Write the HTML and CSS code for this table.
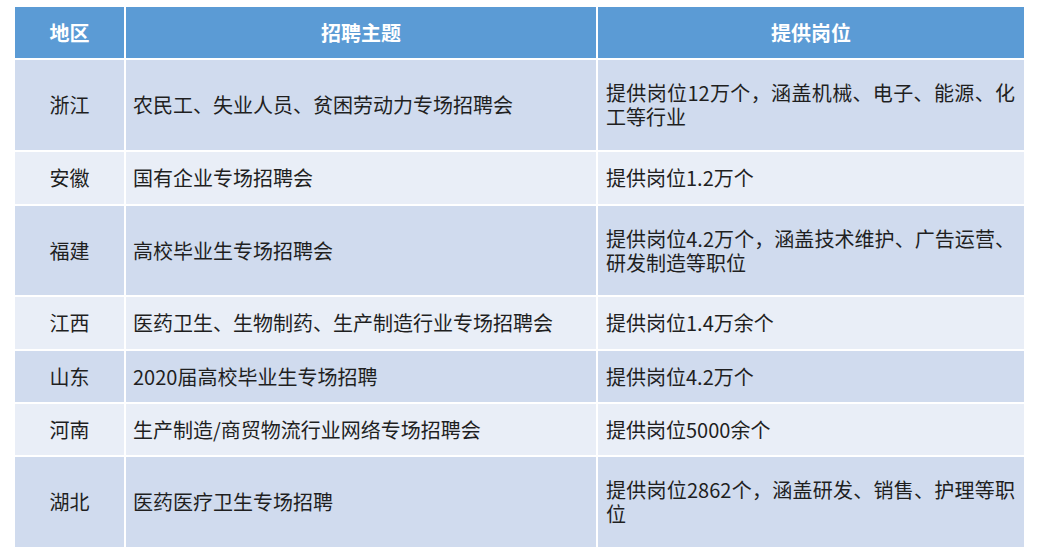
FILE: index.html
```html
<!DOCTYPE html>
<html lang="zh-CN">
<head>
<meta charset="utf-8">
<title>招聘会</title>
<link rel="stylesheet" href="styles.css">
</head>
<body>
<div class="page">
  <table class="jobs">
    <colgroup>
      <col class="c-region">
      <col class="c-theme">
      <col class="c-posts">
    </colgroup>
    <thead>
      <tr class="head">
        <th>地区</th>
        <th>招聘主题</th>
        <th>提供岗位</th>
      </tr>
    </thead>
    <tbody>
      <tr class="dark tall">
        <td class="region">浙江</td>
        <td class="theme">农民工、失业人员、贫困劳动力专场招聘会</td>
        <td class="posts">提供岗位12万个，涵盖机械、电子、能源、化工等行业</td>
      </tr>
      <tr class="light short">
        <td class="region">安徽</td>
        <td class="theme">国有企业专场招聘会</td>
        <td class="posts">提供岗位1.2万个</td>
      </tr>
      <tr class="dark tall2">
        <td class="region">福建</td>
        <td class="theme">高校毕业生专场招聘会</td>
        <td class="posts">提供岗位4.2万个，涵盖技术维护、广告运营、研发制造等职位</td>
      </tr>
      <tr class="light short">
        <td class="region">江西</td>
        <td class="theme">医药卫生、生物制药、生产制造行业专场招聘会</td>
        <td class="posts">提供岗位1.4万余个</td>
      </tr>
      <tr class="dark short2">
        <td class="region">山东</td>
        <td class="theme">2020届高校毕业生专场招聘</td>
        <td class="posts">提供岗位4.2万个</td>
      </tr>
      <tr class="light short2">
        <td class="region">河南</td>
        <td class="theme">生产制造/商贸物流行业网络专场招聘会</td>
        <td class="posts">提供岗位5000余个</td>
      </tr>
      <tr class="dark tall">
        <td class="region">湖北</td>
        <td class="theme">医药医疗卫生专场招聘</td>
        <td class="posts">提供岗位2862个，涵盖研发、销售、护理等职位</td>
      </tr>
    </tbody>
  </table>
</div>
</body>
</html>
```

FILE: styles.css
```css
html, body {
  margin: 0;
  padding: 0;
  background: #ffffff;
}

.page {
  padding: 5px 0 0 13px;
}

.jobs {
  border-collapse: separate;
  border-spacing: 2px;
  table-layout: fixed;
  width: 1013px;
  font-family: "Noto Sans CJK SC", "Noto Sans", sans-serif;
  font-size: 20px;
  line-height: 24px;
  color: #1f1f1f;
}

.c-region { width: 109px; }
.c-theme { width: 470px; }
.c-posts { width: 426px; }

.jobs th,
.jobs td {
  padding: 0 8px;
  vertical-align: middle;
  text-align: left;
}

.head {
  height: 51px;
}

.head th {
  background: #5b9bd5;
  color: #ffffff;
  font-weight: 700;
  font-size: 20px;
  text-align: center;
}

.dark td { background: #d0dbee; }
.light td { background: #e9eef7; }

.tall { height: 90px; }
.tall2 { height: 89px; }
.short { height: 52px; }
.short2 { height: 51px; }

.jobs td.region {
  text-align: center;
}

.jobs td.theme {
  padding-left: 7px;
}

.jobs td.posts {
  text-align: justify;
  padding-right: 9px;
}
```
